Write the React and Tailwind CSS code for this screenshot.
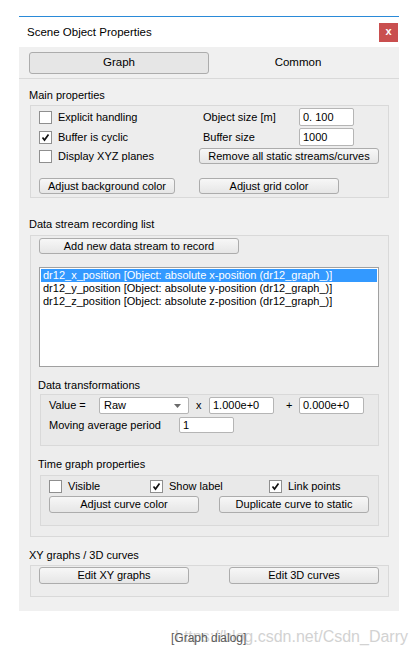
import React from "react";

const FONT = { fontFamily: '"Liberation Sans", Arial, sans-serif' };

function Check({ checked }) {
  return (
    <div className="w-[13px] h-[13px] border border-[#8f8f8f] bg-white flex items-center justify-center shrink-0">
      {checked && (
        <svg width="9" height="9" viewBox="0 0 9 9">
          <path d="M1.5 4.5 L3.5 7 L7.5 1.5" stroke="#111" strokeWidth="1.7" fill="none" />
        </svg>
      )}
    </div>
  );
}

function Btn({ className = "", children }) {
  return (
    <div
      className={`border border-[#acacac] rounded-[3px] bg-gradient-to-b from-[#f7f7f7] to-[#e6e6e6] flex items-center justify-center text-[11px] text-black leading-none ${className}`}
    >
      {children}
    </div>
  );
}

function Field({ className = "", children }) {
  return (
    <div className={`border border-[#b5b5b5] rounded-[2px] bg-white flex items-center pl-[3px] text-[11px] leading-none ${className}`}>
      {children}
    </div>
  );
}

function GroupLabel({ h, pt, children }) {
  return (
    <div className="text-[11px] leading-[13px] text-black -ml-px" style={{ height: h, paddingTop: pt }}>
      {children}
    </div>
  );
}

export default function App() {
  const streams = [
    "dr12_x_position [Object: absolute x-position (dr12_graph_)]",
    "dr12_y_position [Object: absolute y-position (dr12_graph_)]",
    "dr12_z_position [Object: absolute z-position (dr12_graph_)]",
  ];

  return (
    <div className="w-[419px] h-[655px] bg-white relative" style={FONT}>
      <div className="h-[16px]" />
      {/* Window */}
      <div className="ml-[19px] w-[380px] border-t border-[#2a8ad8]">
        {/* Title bar */}
        <div className="h-[30px] bg-white flex items-center justify-between pl-[8px] pr-[1px]">
          <span className="text-[11.5px] text-black pt-[1px]">Scene Object Properties</span>
          <div className="w-[19px] h-[19px] bg-[#c94f4f] flex items-center justify-center text-white text-[11px] font-bold leading-none pb-[2px]">
            x
          </div>
        </div>

        {/* Body */}
        <div className="bg-[#f0f0f0] h-[564px] flex flex-col">
          {/* Tabs */}
          <div className="h-[32px] border-b border-[#d9d9d9] flex items-start pt-[5px] pl-[10px]">
            <Btn className="w-[180px] h-[22px] !bg-none bg-[#e6e6e6] !text-[11.5px]">Graph</Btn>
            <div className="flex-1 h-[22px] flex items-center justify-center text-[11.5px] pr-[12px]">Common</div>
          </div>

          <div className="pl-[11px] pr-[10px] flex flex-col">
            {/* Main properties */}
            <GroupLabel h={26} pt={10}>Main properties</GroupLabel>
            <div className="h-[93px] border border-[#d9d9d9] bg-[#ededed] pl-[8px] pt-[2px] text-[11px]">
              <div className="flex h-[18px] items-center">
                <div className="w-[160px] flex items-center gap-[6px]">
                  <Check />
                  <span>Explicit handling</span>
                </div>
                <span className="w-[100px] pl-[4px]">Object size [m]</span>
                <Field className="w-[55px] h-[18px]">0. 100</Field>
              </div>
              <div className="flex h-[18px] items-center mt-[2px]">
                <div className="w-[160px] flex items-center gap-[6px]">
                  <Check checked />
                  <span>Buffer is cyclic</span>
                </div>
                <span className="w-[100px] pl-[4px]">Buffer size</span>
                <Field className="w-[55px] h-[18px]">1000</Field>
              </div>
              <div className="flex h-[16px] items-center mt-[2px]">
                <div className="w-[160px] flex items-center gap-[6px]">
                  <Check />
                  <span>Display XYZ planes</span>
                </div>
                <Btn className="w-[180px] h-[16px]">Remove all static streams/curves</Btn>
              </div>
              <div className="flex h-[16px] items-center mt-[14px]">
                <div className="w-[160px]">
                  <Btn className="w-[136px] h-[16px]">Adjust background color</Btn>
                </div>
                <Btn className="w-[140px] h-[16px]">Adjust grid color</Btn>
              </div>
            </div>

            {/* Data stream recording list */}
            <GroupLabel h={37} pt={20}>Data stream recording list</GroupLabel>
            <div className="h-[302px] border border-[#d9d9d9] bg-[#ededed] pl-[8px] pt-[2px]">
              <Btn className="w-[200px] h-[16px]">Add new data stream to record</Btn>
              <div className="mt-[13px] w-[340px] h-[100px] border border-[#a0a0a0] bg-white pt-[1px] px-[1px] text-[11px] leading-[13px]">
                {streams.map((s, i) => (
                  <div
                    key={s}
                    className={`pl-[2px] h-[13px] whitespace-nowrap ${i === 0 ? "bg-[#3399ff] text-white" : "text-black"}`}
                  >
                    {s}
                  </div>
                ))}
              </div>

              {/* Data transformations */}
              <GroupLabel h={27} pt={12}>Data transformations</GroupLabel>
              <div className="ml-[1px] w-[339px] h-[52px] border border-[#d9d9d9] bg-[#e9e9e9] pl-[8px] pt-[2px] text-[11px]">
                <div className="flex items-center h-[17px]">
                  <span className="w-[50px]">Value =</span>
                  <div className="w-[90px] h-[17px] border border-[#b5b5b5] rounded-[2px] bg-white flex items-center justify-between pl-[4px] pr-[7px]">
                    <span>Raw</span>
                    <svg width="7" height="4" viewBox="0 0 7 4">
                      <path d="M0 0 L7 0 L3.5 4 Z" fill="#6b6b6b" />
                    </svg>
                  </div>
                  <span className="w-[20px] pl-[7px]">x</span>
                  <Field className="w-[65px] h-[17px]">1.000e+0</Field>
                  <span className="w-[25px] pl-[12px]">+</span>
                  <Field className="w-[65px] h-[17px]">0.000e+0</Field>
                </div>
                <div className="flex items-center h-[16px] mt-[3px]">
                  <span className="w-[130px]">Moving average period</span>
                  <Field className="w-[55px] h-[16px]">1</Field>
                </div>
              </div>

              {/* Time graph properties */}
              <GroupLabel h={29} pt={12}>Time graph properties</GroupLabel>
              <div className="ml-[1px] w-[339px] h-[51px] border border-[#d9d9d9] bg-[#e9e9e9] pl-[8px] pt-[4px] text-[11px]">
                <div className="flex items-center h-[13px]">
                  <div className="w-[101px] flex items-center gap-[6px]">
                    <Check />
                    <span>Visible</span>
                  </div>
                  <div className="w-[119px] flex items-center gap-[6px]">
                    <Check checked />
                    <span>Show label</span>
                  </div>
                  <div className="flex items-center gap-[6px]">
                    <Check checked />
                    <span>Link points</span>
                  </div>
                </div>
                <div className="flex items-center h-[17px] mt-[3px] gap-[20px]">
                  <Btn className="w-[150px] h-[17px]">Adjust curve color</Btn>
                  <Btn className="w-[150px] h-[17px]">Duplicate curve to static</Btn>
                </div>
              </div>
            </div>

            {/* XY graphs / 3D curves */}
            <GroupLabel h={28} pt={12}>XY graphs / 3D curves</GroupLabel>
            <div className="h-[32px] border border-[#d9d9d9] bg-[#ededed] pl-[8px] pt-[1px] flex gap-[40px]">
              <Btn className="w-[150px] h-[17px]">Edit XY graphs</Btn>
              <Btn className="w-[150px] h-[17px]">Edit 3D curves</Btn>
            </div>
          </div>
        </div>
      </div>

      {/* Caption with watermark */}
      <div className="relative h-[45px]">
        <span className="absolute right-[11px] top-[17px] text-[16px] leading-[18px] text-[#d2d2d2] whitespace-nowrap">
          https://blog.csdn.net/Csdn_Darry
        </span>
        <span className="absolute left-[171px] top-[20px] text-[12px] leading-[14px] text-[#5a5a5a] whitespace-nowrap">
          [Graph dialog]
        </span>
      </div>
    </div>
  );
}
